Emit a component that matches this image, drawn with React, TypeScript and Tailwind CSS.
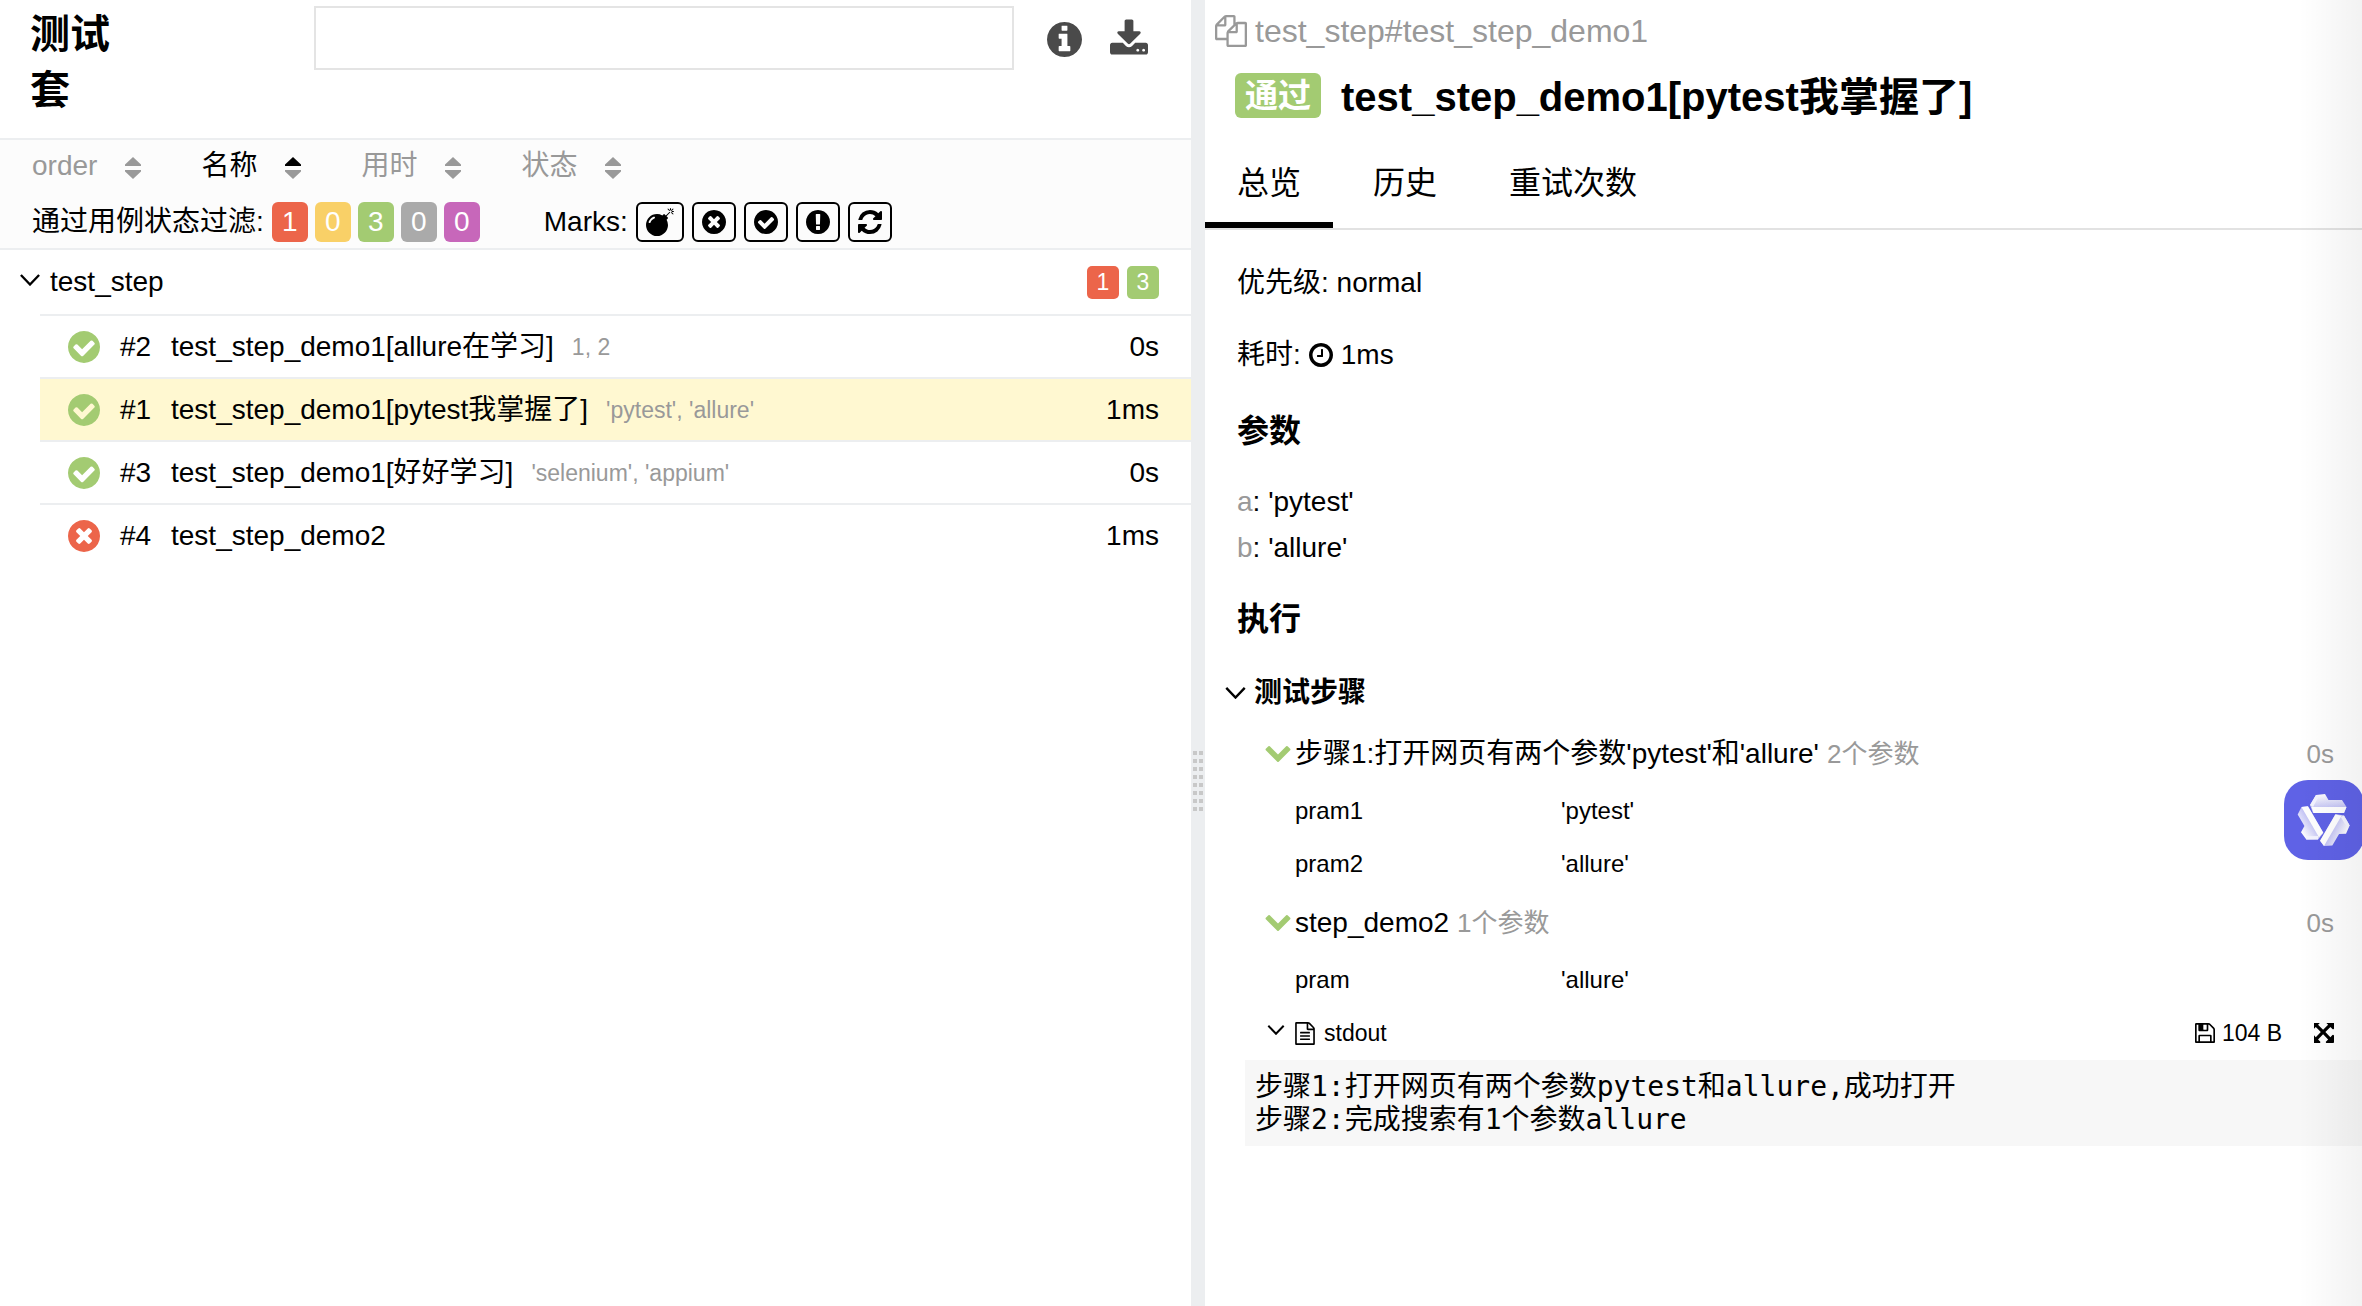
import React from "react";

const CIRCLE = "q0 209-103 385.5t-279.5 279.5-385.5 103-385.5-103-279.5-279.5-103-385.5 103-385.5 279.5-279.5 385.5-103 385.5 103 279.5 279.5 103 385.5z";

const ICONS = {
  info: "M1152 1376v-160q0-14-9-23t-23-9h-96v-512q0-14-9-23t-23-9h-320q-14 0-23 9t-9 23v160q0 14 9 23t23 9h96v320h-96q-14 0-23 9t-9 23v160q0 14 9 23t23 9h448q14 0 23-9t9-23zm-128-896v-160q0-14-9-23t-23-9h-192q-14 0-23 9t-9 23v160q0 14 9 23t23 9h192q14 0 23-9t9-23zm640 416" + CIRCLE,
  download: "M1344 1344q0-26-19-45t-45-19-45 19-19 45 19 45 45 19 45-19 19-45zm256 0q0-26-19-45t-45-19-45 19-19 45 19 45 45 19 45-19 19-45zm128-224v320q0 40-28 68t-68 28h-1472q-40 0-68-28t-28-68v-320q0-40 28-68t68-28h465l135 136q58 56 136 56t136-56l136-136h464q40 0 68 28t28 68zm-325-569q17 41-14 70l-448 448q-18 19-45 19t-45-19l-448-448q-31-29-14-70 17-39 59-39h256v-448q0-26 19-45t45-19h256q26 0 45 19t19 45v448h256q42 0 59 39z",
  check: "M1412 734q0-28-18-46l-91-90q-19-19-45-19t-45 19l-408 407-226-226q-19-19-45-19t-45 19l-91 90q-18 18-18 46 0 27 18 45l362 362q19 19 45 19 27 0 46-19l543-543q18-18 18-45zm252 162" + CIRCLE,
  times: "M1277 1122q0-26-19-45l-181-181 181-181q19-19 19-45 0-27-19-46l-90-90q-19-19-46-19-26 0-45 19l-181 181-181-181q-19-19-45-19-27 0-46 19l-90 90q-19 19-19 46 0 26 19 45l181 181-181 181q-19 19-19 45 0 27 19 46l90 90q19 19 46 19 26 0 45-19l181-181 181 181q19 19 45 19 27 0 46-19l90-90q19-19 19-46zm387-226" + CIRCLE,
  exclamation: "M896 128q209 0 385.5 103t279.5 279.5 103 385.5-103 385.5-279.5 279.5-385.5 103-385.5-103-279.5-279.5-103-385.5 103-385.5 279.5-279.5 385.5-103zm128 1247v-190q0-14-9-23.5t-22-9.5h-192q-13 0-23 10t-10 23v190q0 13 10 23t23 10h192q13 0 22-9.5t9-23.5zm-2-344l18-621q0-12-10-18-10-8-24-8h-220q-14 0-24 8-10 6-10 18l17 621q0 10 10 17.5t24 7.5h185q14 0 23.5-7.5t10.5-17.5z",
  refresh: "M1639 1056q0 5-1 7-64 268-268 434.5t-478 166.5q-146 0-282.5-55t-243.5-157l-129 129q-19 19-45 19t-45-19-19-45v-448q0-26 19-45t45-19h448q26 0 45 19t19 45-19 45l-137 137q71 66 161 102t187 36q134 0 250-65t186-179q11-17 53-117 8-23 30-23h192q13 0 22.5 9.5t9.5 22.5zm25-800v448q0 26-19 45t-45 19h-448q-26 0-45-19t-19-45 19-45l138-138q-148-137-349-137-134 0-250 65t-186 179q-11 17-53 117-8 23-30 23h-199q-13 0-22.5-9.5t-9.5-22.5v-7q65-268 270-434.5t480-166.5q146 0 284 55.5t245 156.5l130-129q19-19 45-19t45 19 19 45z",
  bomb: "M571 589q-10-25-34-35t-49 0q-108 44-191 127t-127 191q-10 25 0 49t35 34q13 5 24 5 42 0 60-40 34-84 98.5-148.5t148.5-98.5q25-11 35-35t0-49zm942-356l46 46-244 243 68 68q19 19 19 45.5t-19 45.5l-64 64q89 161 89 343 0 143-55.5 273.5t-150 225-225 150-273.5 55.5-273.5-55.5-225-150-150-225-55.5-273.5 55.5-273.5 150-225 225-150 273.5-55.5q182 0 343 89l64-64q19-19 45.5-19t45.5 19l68 68zm8-56q-10 10-22 10-13 0-23-10l-91-90q-9-10-9-23t9-23q10-9 23-9t23 9l90 91q10 9 10 22.5t-10 22.5zm230 230q-11 9-23 9t-23-9l-90-91q-10-9-10-22.5t10-22.5q9-10 22.5-10t22.5 10l91 90q9 10 9 23t-9 23zm41-183q0 14-9 23t-23 9h-96q-14 0-23-9t-9-23 9-23 23-9h96q14 0 23 9t9 23zm-192-192v96q0 14-9 23t-23 9-23-9-9-23v-96q0-14 9-23t23-9 23 9 9 23zm151 55l-91 90q-10 10-22 10-13 0-23-10-10-9-10-22.5t10-22.5l90-91q10-9 23-9t23 9q9 10 9 23t-9 23z",
  files: "M1696 384q40 0 68 28t28 68v1216q0 40-28 68t-68 28h-960q-40 0-68-28t-28-68v-288h-544q-40 0-68-28t-28-68v-672q0-40 20-88t48-76l408-408q28-28 76-48t88-20h416q40 0 68 28t28 68v328q68-40 128-40h416zm-544 213l-299 299h299v-299zm-640-384l-299 299h299v-299zm196 647l316-316v-416h-384v416q0 40-28 68t-68 28h-416v640h512v-256q0-40 20-88t48-76zm956 804v-1152h-384v416q0 40-28 68t-68 28h-416v640h896z",
  file: "M1596 380q28 28 48 76t20 88v1152q0 40-28 68t-68 28h-1344q-40 0-68-28t-28-68v-1600q0-40 28-68t68-28h896q40 0 88 20t76 48zm-444-244v376h376q-10-29-22-41l-313-313q-12-12-41-22zm384 1528v-1024h-416q-40 0-68-28t-28-68v-416h-768v1536h1280zm-1024-864q0-14 9-23t23-9h704q14 0 23 9t9 23v64q0 14-9 23t-23 9h-704q-14 0-23-9t-9-23v-64zm736 224q14 0 23 9t9 23v64q0 14-9 23t-23 9h-704q-14 0-23-9t-9-23v-64q0-14 9-23t23-9h704zm0 256q14 0 23 9t9 23v64q0 14-9 23t-23 9h-704q-14 0-23-9t-9-23v-64q0-14 9-23t23-9h704z",
  floppy: "M512 1536h768v-384h-768v384zm896 0h128v-896q0-14-10-38.5t-20-34.5l-281-281q-10-10-34-20t-39-10v416q0 40-28 68t-68 28h-576q-40 0-68-28t-28-68v-416h-128v1280h128v-416q0-40 28-68t68-28h832q40 0 68 28t28 68v416zm-384-928v-320q0-13-9.5-22.5t-22.5-9.5h-192q-13 0-22.5 9.5t-9.5 22.5v320q0 13 9.5 22.5t22.5 9.5h192q13 0 22.5-9.5t9.5-22.5zm640 32v928q0 40-28 68t-68 28h-1344q-40 0-68-28t-28-68v-1344q0-40 28-68t68-28h928q40 0 88 20t76 48l280 280q28 28 48 76t20 88z",
  clock: "M1024 544v448q0 14-9 23t-23 9h-320q-14 0-23-9t-9-23v-64q0-14 9-23t23-9h224v-352q0-14 9-23t23-9h64q14 0 23 9t9 23zm416 352q0-148-73-273t-198-198-273-73-273 73-198 198-73 273 73 273 198 198 273 73 273-73 198-198 73-273zm224 0" + CIRCLE,
  expand: "M1283 413l-355 355 355 355 144-144q29-31 70-14 39 17 39 59v448q0 26-19 45t-45 19h-448q-42 0-59-40-17-39 14-69l144-144-355-355-355 355 144 144q31 30 14 69-17 40-59 40h-448q-26 0-45-19t-19-45v-448q0-42 40-59 39-17 69 14l144 144 355-355-355-355-144 144q-19 19-45 19-12 0-24-5-40-17-40-59v-448q0-26 19-45t45-19h448q42 0 59 40 17 39-14 69l-144 144 355 355 355-355-144-144q-31-30-14-69 17-40 59-40h448q26 0 45 19t19 45v448q0 42-39 59-13 5-25 5-26 0-45-19z",
  chevron: "M1683 808l-742 741q-19 19-45 19t-45-19l-742-741q-19-19-19-45.5t19-45.5l166-165q19-19 45-19t45 19l531 531 531-531q19-19 45-19t45 19l166 165q19 19 19 45.5t-19 45.5z",
};

type IconName = keyof typeof ICONS;

function Icon({ name, box = "0 0 1792 1792", className }: { name: IconName; box?: string; className: string }) {
  return (
    <svg viewBox={box} className={`shrink-0 fill-current ${className}`} aria-hidden="true">
      <path d={ICONS[name]} />
    </svg>
  );
}

const ROUND = "128 128 1536 1536";

function ThinChevron({ className }: { className: string }) {
  return (
    <svg viewBox="0 0 22 13" className={`shrink-0 ${className}`} fill="none" stroke="currentColor" strokeWidth="2.6" aria-hidden="true">
      <path d="M1 1l10 10.4L21 1" />
    </svg>
  );
}

const SORTERS = [
  { label: "order", active: false },
  { label: "名称", active: true },
  { label: "用时", active: false },
  { label: "状态", active: false },
];

const STATUSES = [
  { name: "failed", count: 1, color: "bg-[#ec654a]" },
  { name: "broken", count: 0, color: "bg-[#f9d067]" },
  { name: "passed", count: 3, color: "bg-[#a3cb72]" },
  { name: "skipped", count: 0, color: "bg-[#aaaaaa]" },
  { name: "unknown", count: 0, color: "bg-[#c767ba]" },
];

const MARKS: { label: string; icon: IconName; box: string; size: string }[] = [
  { label: "Flaky", icon: "bomb", box: "0 0 1792 1792", size: "size-7" },
  { label: "New failed", icon: "times", box: ROUND, size: "size-6" },
  { label: "New passed", icon: "check", box: ROUND, size: "size-6" },
  { label: "New broken", icon: "exclamation", box: ROUND, size: "size-6" },
  { label: "Retries", icon: "refresh", box: ROUND, size: "size-6" },
];

const CASES = [
  { order: "#2", name: "test_step_demo1[allure在学习]", params: "1, 2", time: "0s", passed: true, selected: false },
  { order: "#1", name: "test_step_demo1[pytest我掌握了]", params: "'pytest', 'allure'", time: "1ms", passed: true, selected: true },
  { order: "#3", name: "test_step_demo1[好好学习]", params: "'selenium', 'appium'", time: "0s", passed: true, selected: false },
  { order: "#4", name: "test_step_demo2", params: "", time: "1ms", passed: false, selected: false },
];

const STEPS = [
  {
    name: "步骤1:打开网页有两个参数'pytest'和'allure'",
    note: "2个参数",
    time: "0s",
    params: [
      ["pram1", "'pytest'"],
      ["pram2", "'allure'"],
    ],
  },
  { name: "step_demo2", note: "1个参数", time: "0s", params: [["pram", "'allure'"]] },
];

function SuitesPane() {
  return (
    <section className="flex min-w-0 flex-1 flex-col">
      <header className="flex h-[140px] items-start border-b-2 border-[#eceef0] pl-[30px] pr-[43px]">
        <h2 className="mt-1.5 w-[104px] shrink-0 text-[40px] font-bold leading-[56px]">
          测试
          <br />
          套
        </h2>
        <input
          type="text"
          aria-label="搜索"
          className="ml-[180px] mt-1.5 h-16 min-w-0 flex-1 border-2 border-[#e4e4e4] px-4 outline-none"
        />
        <div className="ml-[33px] mt-[19px] flex items-start gap-7 text-[#4a4a4a]">
          <button type="button" aria-label="信息" className="mt-[3px]">
            <Icon name="info" box={ROUND} className="size-[35px]" />
          </button>
          <button type="button" aria-label="下载">
            <Icon name="download" box="64 0 1664 1536" className="h-[36px] w-[38px]" />
          </button>
        </div>
      </header>

      <div className="h-[110px] border-b-2 border-[#eceef0] bg-[#fcfcfc] px-8">
        <div className="flex h-[52px] items-center gap-[60px]">
          {SORTERS.map((s) => (
            <button
              key={s.label}
              type="button"
              className={s.active ? "flex items-center gap-7" : "flex items-center gap-7 text-[#999]"}
            >
              {s.label}
              <svg viewBox="0 0 16 22" className="mt-1 h-[22px] w-4" aria-hidden="true">
                <path d="M8 0l8 7.6V9H0V7.600z" className="fill-current" />
                <path d="M8 22l8-7.600V13H0v1.400z" className="fill-[#999]" />
              </svg>
            </button>
          ))}
        </div>
        <div className="mt-2.5 flex h-10 items-center">
          <span>通过用例状态过滤:</span>
          <div className="ml-2 flex gap-[7px]">
            {STATUSES.map((s) => (
              <button key={s.name} type="button" aria-label={s.name} className={`h-10 w-9 rounded-[6px] text-white ${s.color}`}>
                {s.count}
              </button>
            ))}
          </div>
          <span className="ml-16">Marks:</span>
          <div className="ml-2 flex gap-2">
            {MARKS.map((m) => (
              <button
                key={m.label}
                type="button"
                aria-label={m.label}
                className="flex h-10 items-center rounded-[6px] border-2 border-black px-2"
              >
                <Icon name={m.icon} box={m.box} className={m.size} />
              </button>
            ))}
          </div>
        </div>
      </div>

      <button type="button" className="flex h-16 items-center pl-5 pr-8 text-left">
        <ThinChevron className="mb-1 h-3 w-5" />
        <span className="ml-2.5 flex-1">test_step</span>
        <span className="flex gap-2 text-[23px] leading-[33px] text-white">
          <span className="w-8 rounded-[5px] bg-[#ec654a] text-center">1</span>
          <span className="w-8 rounded-[5px] bg-[#a3cb72] text-center">3</span>
        </span>
      </button>
      <ul className="pl-10">
        {CASES.map((c) => (
          <li key={c.order} className="border-t-2 border-[#eceef0]">
            <a
              href={c.order}
              className={`flex h-[61px] items-center pl-7 pr-8 ${c.selected ? "bg-[#fff8d1]" : ""}`}
            >
              <Icon
                name={c.passed ? "check" : "times"}
                box={ROUND}
                className={c.passed ? "size-8 text-[#a3cb72]" : "size-8 text-[#ec654a]"}
              />
              <span className="ml-5 w-[51px]">{c.order}</span>
              <span>{c.name}</span>
              <span className="ml-[18px] flex-1 text-[23px] text-[#999]">{c.params}</span>
              <span>{c.time}</span>
            </a>
          </li>
        ))}
      </ul>
    </section>
  );
}

function Gutter() {
  return (
    <div className="flex w-3.5 shrink-0 items-center justify-center bg-[#eceef0]">
      <svg viewBox="0 0 10 60" className="mt-64 h-[60px] w-2.5 fill-[#c8c8c8]" aria-hidden="true">
        {[0, 8, 16, 24, 32, 40, 48, 56].map((y) => (
          <g key={y}>
            <rect x="0" y={y} width="4" height="4" />
            <rect x="6" y={y} width="4" height="4" />
          </g>
        ))}
      </svg>
    </div>
  );
}

function TestCasePane() {
  return (
    <section className="flex w-[1157px] shrink-0 flex-col">
      <div className="flex h-[62px] items-center gap-2 pl-2.5 text-[32px] text-[#999]">
        <Icon name="files" className="size-8" />
        <span>test_step#test_step_demo1</span>
      </div>
      <h2 className="flex h-[70px] items-center gap-5 pl-[30px] text-[40px] font-bold">
        <span className="mb-1 rounded-[6px] bg-[#a3cb72] px-2.5 text-[33px] leading-[45px] text-white">通过</span>
        <span>test_step_demo1[pytest我掌握了]</span>
      </h2>
      <nav className="flex h-[98px] items-stretch gap-2 border-b-2 border-[#e2e2e2] text-[32px]">
        <a href="#overview" className="flex items-center border-b-[6px] border-black px-8 pt-3">总览</a>
        <a href="#history" className="flex items-center px-8 pt-1.5">历史</a>
        <a href="#retries" className="flex items-center px-8 pt-1.5">重试次数</a>
      </nav>

      <div className="pl-8">
        <p className="mt-[33px] leading-[40px]">优先级: normal</p>
        <p className="mt-8 flex items-center gap-2 leading-[40px]">
          耗时:
          <Icon name="clock" box={ROUND} className="size-6" />
          1ms
        </p>
        <h3 className="mt-8 text-[32px] font-bold leading-[48px]">参数</h3>
        <div className="mt-6 leading-[46px]">
          <p><span className="text-[#999]">a</span>: 'pytest'</p>
          <p><span className="text-[#999]">b</span>: 'allure'</p>
        </div>
        <h3 className="mt-6 text-[32px] font-bold leading-[48px]">执行</h3>
      </div>

      <button type="button" className="mb-2 mt-[30px] flex h-10 items-center gap-2 pl-5 text-left font-bold">
        <ThinChevron className="h-3 w-[21px]" />
        测试步骤
      </button>
      {STEPS.map((step) => (
        <div key={step.name} className="pt-[3px]">
          <button type="button" className="flex h-[60px] w-full items-center pl-[60px] pr-7 text-left">
            <Icon name="chevron" box="90 533 1612 1035" className="h-4 w-[26px] text-[#a3cb72]" />
            <span className="ml-1">{step.name}</span>
            <span className="ml-2 flex-1 text-[26px] text-[#999]">{step.note}</span>
            <span className="text-[26px] text-[#999]">{step.time}</span>
          </button>
          <table className="ml-[90px] text-left text-[24px]">
            <tbody>
              {step.params.map(([key, value]) => (
                <tr key={key} className="h-[53px]">
                  <th scope="row" className="w-[266px] font-normal">{key}</th>
                  <td>{value}</td>
                </tr>
              ))}
            </tbody>
          </table>
        </div>
      ))}
      <div className="flex h-[54px] items-center pl-[62px] pr-7 text-[23px]">
        <button type="button" className="flex items-center">
          <ThinChevron className="mb-1.5 h-2.5 w-[18px]" />
          <Icon name="file" box="128 0 1536 1792" className="ml-2.5 h-[23px] w-5" />
          <span className="ml-[9px]">stdout</span>
        </button>
        <a href="#attachment" className="ml-auto flex items-center gap-[7px]">
          <Icon name="floppy" box={ROUND} className="size-5" />
          104 B
        </a>
        <button type="button" aria-label="全屏" className="ml-8">
          <Icon name="expand" box="128 128 1408 1408" className="size-5" />
        </button>
      </div>
      <pre className="ml-10 bg-[#f7f7f7] p-2.5 font-['DejaVu_Sans_Mono','Noto_Sans_CJK_SC',monospace] text-[28px] leading-[33px]">
        {"步骤1:打开网页有两个参数pytest和allure,成功打开\n步骤2:完成搜索有1个参数allure"}
      </pre>
    </section>
  );
}

function AssistantButton() {
  return (
    <button type="button" aria-label="助手" className="absolute right-[-2px] top-[780px] size-20 rounded-3xl bg-[#5f62e6]">
      <svg viewBox="0 0 80 80" className="size-20" aria-hidden="true">
        <defs>
          <linearGradient id="blade" x1="0.35" y1="0" x2="0.5" y2="1">
            <stop offset="0" stopColor="#fff" />
            <stop offset="0.75" stopColor="#c3c3f5" />
          </linearGradient>
        </defs>
        {[0, 120, 240].map((angle) => (
          <g key={angle} transform={`rotate(${angle} 40 40)`}>
            <path d="M26 25l6-10 9-1 3.500 6H58l4.500 7-2.500 6H29z" fill="url(#blade)" />
            <path d="M26 25l6-10 3 1-6 11z" fill="#f4f4ff" />
            <path d="M27.500 27h35L60 33H29.500z" fill="#fff" />
          </g>
        ))}
      </svg>
    </button>
  );
}

export default function App() {
  return (
    <main className="relative flex min-h-screen overflow-hidden bg-white font-['Liberation_Sans','Noto_Sans_CJK_SC',sans-serif] text-[28px] leading-10 text-black">
      <SuitesPane />
      <Gutter />
      <TestCasePane />
      <AssistantButton />
      <div className="pointer-events-none absolute inset-y-0 right-0 w-16 bg-linear-to-l from-black/5 to-transparent" />
    </main>
  );
}
